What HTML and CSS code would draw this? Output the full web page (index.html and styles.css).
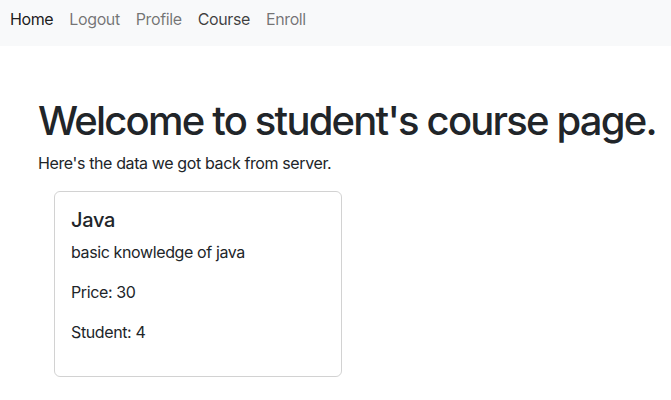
FILE: index.html
```html
<!DOCTYPE html>
<html lang="en">
<head>
<meta charset="utf-8">
<title>Student course page</title>
<link rel="stylesheet" href="styles.css">
</head>
<body>
<nav class="navbar">
  <a class="nav-link active" href="#">Home</a>
  <a class="nav-link" href="#">Logout</a>
  <a class="nav-link" href="#">Profile</a>
  <a class="nav-link focus" href="#">Course</a>
  <a class="nav-link" href="#">Enroll</a>
</nav>
<main class="container">
  <h1 class="title">Welcome to student's course page.</h1>
  <p class="lead-text">Here's the data we got back from server.</p>
  <div class="card">
    <h5 class="card-title">Java</h5>
    <p class="card-text">basic knowledge of java</p>
    <p class="card-text">Price: 30</p>
    <p class="card-text">Student: 4</p>
  </div>
</main>
</body>
</html>
```
FILE: styles.css
```css
* { box-sizing: border-box; }
body {
  margin: 0;
  font-family: Inter, "Liberation Sans", sans-serif;
  font-size: 16px;
  line-height: 1.5;
  letter-spacing: -0.38px;
  color: #212529;
  background: #fff;
}
.navbar {
  display: flex;
  gap: 16px;
  align-items: flex-start;
  height: 46px;
  padding: 7px 10px 0;
  background: #f8f9fa;
}
.nav-link {
  text-decoration: none;
  color: rgba(0, 0, 0, 0.55);
}
.nav-link.active { color: rgba(0, 0, 0, 0.9); }
.nav-link.focus { color: rgba(0, 0, 0, 0.75); }
.container {
  padding: 51px 38px 0;
}
.title {
  margin: 0 0 6px;
  font-size: 40px;
  font-weight: 500;
  line-height: 1.2;
  letter-spacing: -1.8px;
  white-space: nowrap;
}
.lead-text { margin: 0 0 16px; }
.card {
  width: 288px;
  margin-left: 16px;
  padding: 16px;
  border: 1px solid rgba(0, 0, 0, 0.175);
  border-radius: 6px;
}
.card-title {
  margin: 0 0 8px;
  font-size: 20px;
  font-weight: 500;
  line-height: 1.2;
  letter-spacing: -0.3px;
}
.card-text { margin: 0 0 16px; }
```
